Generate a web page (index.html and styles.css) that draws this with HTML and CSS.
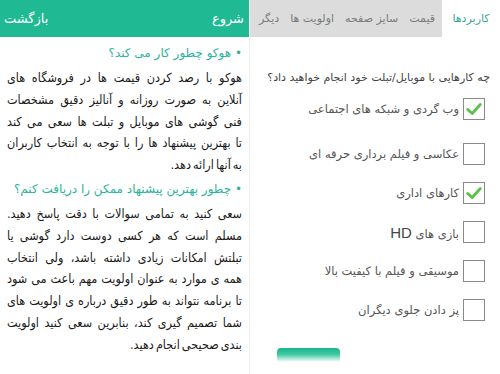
FILE: index.html
```html
<!DOCTYPE html>
<html lang="fa" dir="rtl">
<head>
<meta charset="utf-8">
<link rel="stylesheet" href="styles.css">
</head>
<body>
<div class="screen">
  <section class="panel right">
    <nav class="tabs">
      <div class="tab active">کاربردها</div>
      <div class="tab-group">
        <div class="tab">قیمت</div>
        <div class="tab">سایز صفحه</div>
        <div class="tab">اولویت ها</div>
        <div class="tab">دیگر</div>
      </div>
    </nav>
    <div class="form">
      <p class="question">چه کارهایی با موبایل/تبلت خود انجام خواهید داد؟</p>
      <ul class="options">
        <li class="option first"><span class="box checked"><svg viewBox="0 0 20 20" width="18" height="18"><path d="M3 10.5 L8 15 L17 5" fill="none" stroke="#5cc14a" stroke-width="3.2" stroke-linecap="round" stroke-linejoin="round"/></svg></span><span class="label">وب گردی و شبکه های اجتماعی</span></li>
        <li class="option"><span class="box"></span><span class="label">عکاسی و فیلم برداری حرفه ای</span></li>
        <li class="option"><span class="box checked"><svg viewBox="0 0 20 20" width="18" height="18"><path d="M3 10.5 L8 15 L17 5" fill="none" stroke="#5cc14a" stroke-width="3.2" stroke-linecap="round" stroke-linejoin="round"/></svg></span><span class="label">کارهای اداری</span></li>
        <li class="option"><span class="box"></span><span class="label">بازی های <span class="hd">HD</span></span></li>
        <li class="option"><span class="box"></span><span class="label">موسیقی و فیلم با کیفیت بالا</span></li>
        <li class="option"><span class="box"></span><span class="label">پز دادن جلوی دیگران</span></li>
      </ul>
      <div class="btn-row"><div class="btn"></div></div>
    </div>
  </section>
  <section class="panel left">
    <header class="bar">
      <span class="bar-title">شروع</span>
      <span class="bar-back">بازگشت</span>
    </header>
    <article class="content">
      <h2 class="head">• هوکو چطور کار می کند؟</h2>
      <p class="text">
        <span class="ln">هوکو با رصد کردن قیمت ها در فروشگاه های</span>
        <span class="ln">آنلاین به صورت روزانه و آنالیز دقیق مشخصات</span>
        <span class="ln">فنی گوشی های موبایل و تبلت ها سعی می کند</span>
        <span class="ln">تا بهترین پیشنهاد ها را با توجه به انتخاب کاربران</span>
        <span class="ln end">به آنها ارائه دهد.</span>
      </p>
      <h2 class="head">• چطور بهترین پیشنهاد ممکن را دریافت کنم؟</h2>
      <p class="text">
        <span class="ln">سعی کنید به تمامی سوالات با دقت پاسخ دهید.</span>
        <span class="ln">مسلم است که هر کسی دوست دارد گوشی یا</span>
        <span class="ln">تبلتش امکانات زیادی داشته باشد، ولی انتخاب</span>
        <span class="ln">همه ی موارد به عنوان اولویت مهم باعث می شود</span>
        <span class="ln">تا برنامه نتواند به طور دقیق درباره ی اولویت های</span>
        <span class="ln">شما تصمیم گیری کند، بنابرین سعی کنید اولویت</span>
        <span class="ln end">بندی صحیحی انجام دهید.</span>
      </p>
    </article>
  </section>
</div>
</body>
</html>
```

FILE: styles.css
```css
* { box-sizing: border-box; }
html, body { margin: 0; padding: 0; }
body {
  width: 500px;
  height: 374px;
  overflow: hidden;
  background: #fff;
  font-family: "DejaVu Sans", sans-serif;
}
.screen {
  display: flex;
  flex-direction: row;
  width: 500px;
  height: 374px;
}
.panel {
  width: 250px;
  height: 374px;
  overflow: hidden;
  background: #fff;
}
.panel.left { border-right: 1px solid #eee; }

/* right panel */
.tabs {
  display: flex;
  height: 37px;
}
.tab {
  display: flex;
  align-items: center;
  justify-content: center;
  font-size: 11px;
  color: #7a7a7a;
  white-space: nowrap;
}
.tab.active {
  width: 58px;
  color: #3aa79a;
  background: #fff;
}
.tab-group {
  flex: 1;
  display: flex;
  justify-content: space-between;
  padding: 0 7px 0 9px;
  background: #dcdcdc;
}
.form {
  padding: 31px 10px 0 4px;
}
.question {
  margin: 0;
  font-size: 11px;
  color: #444;
  line-height: 20px;
  white-space: nowrap;
}
.options {
  list-style: none;
  margin: 10px 0 0 0;
  padding: 0 5px 0 0;
  display: flex;
  flex-direction: column;
  gap: 17px;
}
.option.first { margin-bottom: 6px; }
.option {
  display: flex;
  align-items: center;
  gap: 4px;
  height: 22px;
}
.box {
  width: 22px;
  height: 22px;
  border: 1px solid #8a8a8a;
  background: #fff;
  display: flex;
  align-items: center;
  justify-content: center;
  flex: none;
}
.label {
  font-size: 11.5px;
  color: #555;
}
.hd { font-size: 15px; font-family: "Liberation Sans", sans-serif; color: #444; }
.btn-row {
  display: flex;
  justify-content: flex-end;
  padding-left: 23px;
  margin-top: 27px;
}
.btn {
  width: 63px;
  height: 14px;
  border-radius: 4px 4px 0 0;
  background: linear-gradient(#19b48d, #3fc7a1 45%, #ffffff);
}

/* left panel */
.bar {
  height: 37px;
  background: #1fb993;
  color: #fff;
  display: flex;
  align-items: center;
  justify-content: space-between;
  padding: 0 5px 0 4px;
  font-size: 13px;
}
.content {
  padding: 4px 7px 0 7px;
}
.head {
  margin: 0;
  font-size: 12px;
  font-weight: normal;
  color: #2bb49a;
  line-height: 24px;
}
.text {
  margin: 2px 0 1px 0;
  font-family: "DejaVu Sans Condensed", "DejaVu Sans", sans-serif;
  font-size: 12.5px;
  word-spacing: -1.5px;
  line-height: 21.8px;
  color: #1a1a1a;
}
.ln {
  display: block;
  text-align: justify;
  text-align-last: justify;
}
.ln.end { text-align-last: right; }
```
